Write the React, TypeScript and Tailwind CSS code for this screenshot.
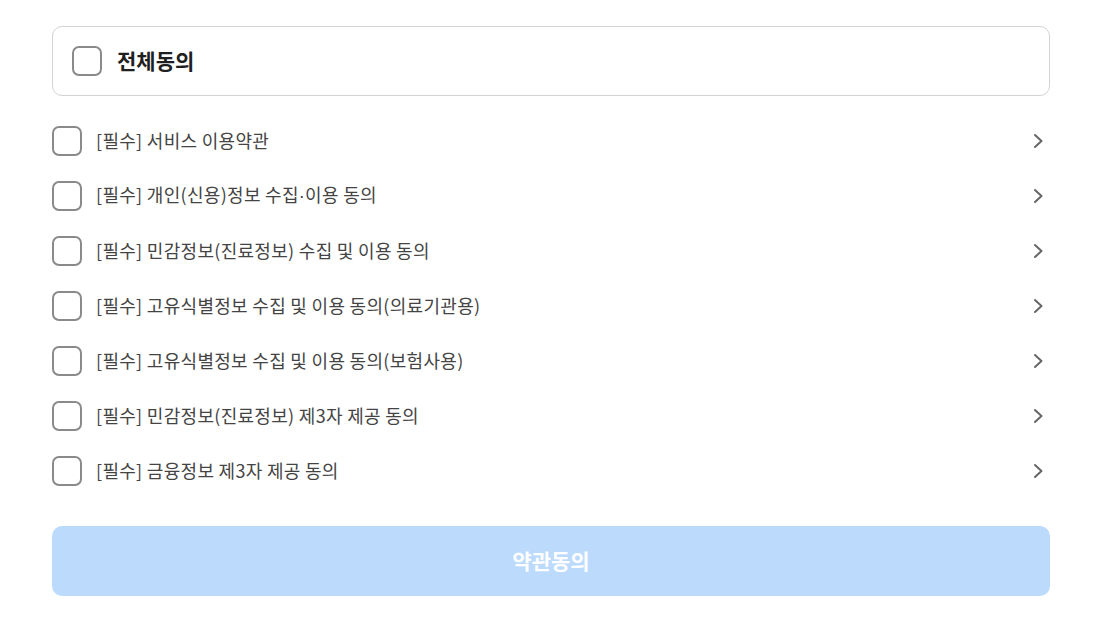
import { useState } from 'react';

const terms = [
  '[필수] 서비스 이용약관',
  '[필수] 개인(신용)정보 수집·이용 동의',
  '[필수] 민감정보(진료정보) 수집 및 이용 동의',
  '[필수] 고유식별정보 수집 및 이용 동의(의료기관용)',
  '[필수] 고유식별정보 수집 및 이용 동의(보험사용)',
  '[필수] 민감정보(진료정보) 제3자 제공 동의',
  '[필수] 금융정보 제3자 제공 동의',
];

function Box({ checked }: { checked: boolean }) {
  return (
    <span
      className={`flex h-[30px] w-[30px] shrink-0 items-center justify-center rounded-[7px] border-2 ${
        checked ? 'border-[#3b82f6] bg-[#3b82f6]' : 'border-[#8a8a8a] bg-white'
      }`}
    />
  );
}

function Chevron() {
  return (
    <svg width="14" height="16" viewBox="0 0 14 16" fill="none" className="shrink-0">
      <path d="M4 2L10.5 8L4 14" stroke="#666" strokeWidth="2" strokeLinecap="round" strokeLinejoin="round" />
    </svg>
  );
}

// the CJK font draws a full-width middle dot, so that one glyph comes from a latin font
function Label({ text }: { text: string }) {
  const parts = text.split('·');
  return (
    <>
      {parts.map((p, i) => (
        <span key={i}>
          {i > 0 && <span style={{ fontFamily: '"Liberation Sans", sans-serif' }}>·</span>}
          {p}
        </span>
      ))}
    </>
  );
}

export default function App() {
  const [checked, setChecked] = useState<boolean[]>(terms.map(() => false));
  const all = checked.every(Boolean);

  return (
    <main
      className="min-h-screen bg-white pt-[26px]"
      style={{ fontFamily: '"Noto Sans CJK KR", "Noto Sans", sans-serif' }}
    >
      <div className="ml-[52px] w-[998px]">
        <button
          className="flex h-[70px] w-full items-center gap-[15px] rounded-[10px] border border-[#d3d3d3] px-[19px] text-left"
          onClick={() => setChecked(terms.map(() => !all))}
        >
          <Box checked={all} />
          <span className="text-[21px] font-bold text-[#1f1f1f]">전체동의</span>
        </button>

        <ul className="mt-[17px]">
          {terms.map((t, i) => (
            <li key={t} className="flex h-[55px] items-center">
              <button
                className="flex flex-1 items-center gap-[14px] text-left"
                onClick={() => setChecked(checked.map((c, j) => (j === i ? !c : c)))}
              >
                <Box checked={checked[i]} />
                <span className="text-[18px] tracking-[0.3px] text-[#444]">
                  <Label text={t} />
                </span>
              </button>
              <span className="mr-[5px]">
                <Chevron />
              </span>
            </li>
          ))}
        </ul>

        <button
          disabled={!all}
          className={`mt-[28px] flex h-[70px] w-full items-center justify-center rounded-[10px] text-[21px] font-bold text-white ${
            all ? 'bg-[#3b82f6]' : 'bg-[#bbdafc]'
          }`}
        >
          약관동의
        </button>
      </div>
    </main>
  );
}
